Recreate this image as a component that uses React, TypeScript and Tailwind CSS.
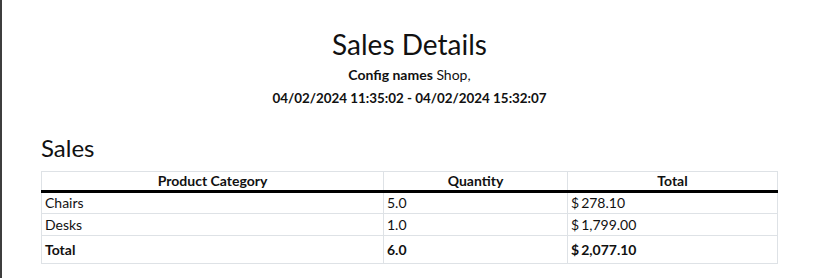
const rows = [
  { category: "Chairs", qty: "5.0", total: "278.10" },
  { category: "Desks", qty: "1.0", total: "1,799.00" },
];

function Money({ value }: { value: string }) {
  return (
    <>
      $<span className="ml-[2px]">{value}</span>
    </>
  );
}

export default function App() {
  return (
    <div
      className="min-h-[278px] w-full border-l-2 border-[#3d3d3d] bg-white text-[#111] pl-[39px] pr-[37px] pt-[27px]"
      style={{ fontFamily: "Lato, 'Liberation Sans', sans-serif" }}
    >
      <div className="flex flex-col items-center">
        <h1 className="text-[28px] leading-[34px]">Sales Details</h1>
        <div className="mt-[3px] text-[14px] leading-[22px]">
          <span className="font-bold">Config names</span> Shop,
        </div>
        <div className="text-[13.4px] font-bold leading-[24px]">
          04/02/2024 11:35:02 - 04/02/2024 15:32:07
        </div>
      </div>

      <h2 className="mt-[23px] text-[24px] leading-[30px]">Sales</h2>

      <table className="mt-[8px] w-full border-collapse text-[14px] leading-[18px]">
        <thead>
          <tr className="border-b-[3px] border-black">
            <th className="h-[20px] w-[342px] border border-b-0 border-[#dee2e6] p-0 font-bold">
              Product Category
            </th>
            <th className="w-[184px] border border-b-0 border-[#dee2e6] p-0 font-bold">Quantity</th>
            <th className="border border-b-0 border-[#dee2e6] p-0 font-bold">Total</th>
          </tr>
        </thead>
        <tbody>
          {rows.map((r) => (
            <tr key={r.category}>
              <td className="h-[22px] border border-[#dee2e6] px-[3px] py-0">{r.category}</td>
              <td className="border border-[#dee2e6] px-[3px] py-0">{r.qty}</td>
              <td className="border border-[#dee2e6] px-[3px] py-0">
                <Money value={r.total} />
              </td>
            </tr>
          ))}
          <tr className="font-bold">
            <td className="h-[28px] border border-[#dee2e6] px-[3px] py-0">Total</td>
            <td className="border border-[#dee2e6] px-[3px] py-0">6.0</td>
            <td className="border border-[#dee2e6] px-[3px] py-0">
              <Money value="2,077.10" />
            </td>
          </tr>
        </tbody>
      </table>
    </div>
  );
}
